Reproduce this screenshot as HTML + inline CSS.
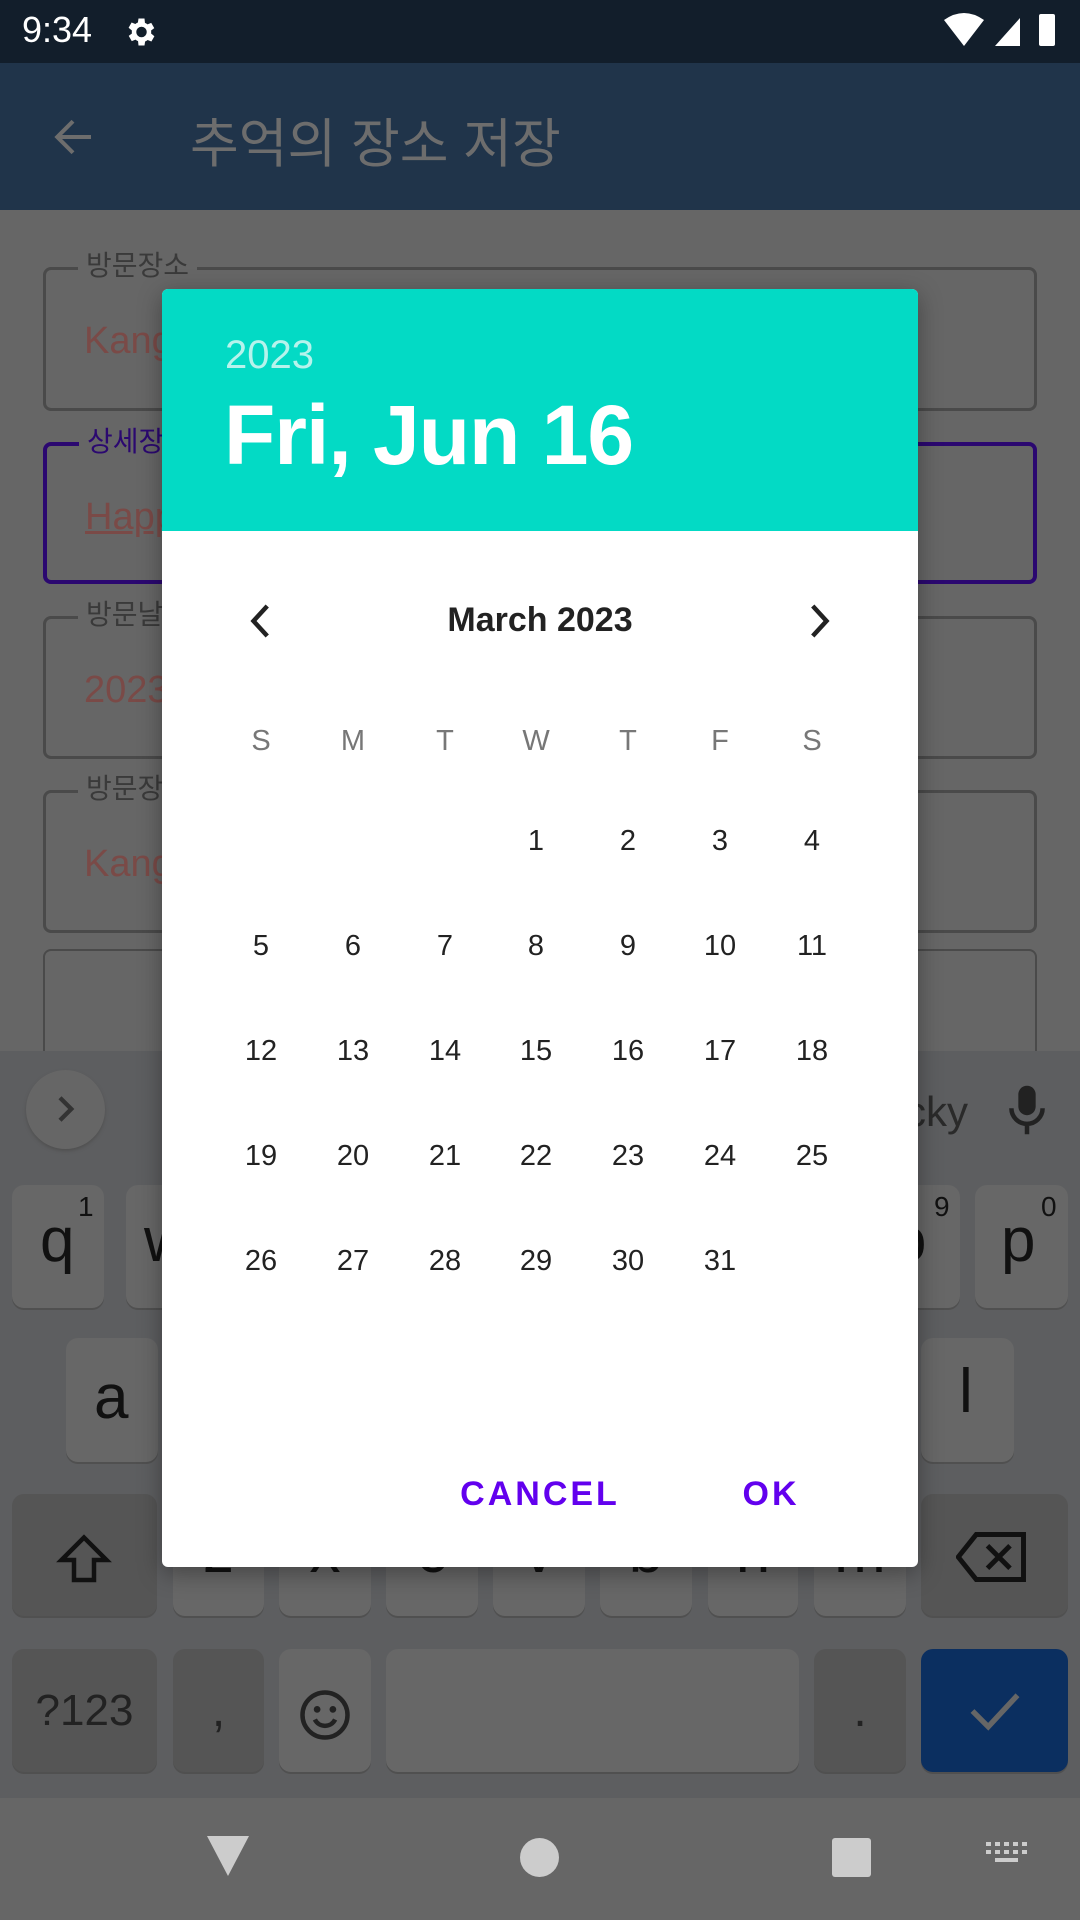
<!DOCTYPE html>
<html><head><meta charset="utf-8"><style>
*{margin:0;padding:0;box-sizing:border-box}
body{width:1080px;height:1920px;position:relative;overflow:hidden;background:#666;font-family:"Liberation Sans","Noto Sans CJK KR",sans-serif}
.a{position:absolute}
.fld{position:absolute;left:43px;width:994px;border:3px solid #4a4a4a;border-radius:8px}
.lbl{position:absolute;left:32px;top:-22px;background:#666;padding:0 8px;font-size:28px;color:#3a3a3a;line-height:36px}
.val{position:absolute;left:38px;font-size:38px;color:#7a4a47}
.key{position:absolute;background:#676767;border-radius:12px;box-shadow:0 2px 0 #505050;color:#111;text-align:center}
.dk{background:#555}
.kl{position:absolute;left:0;width:100%;top:22px;font-size:62px;color:#111}
.day{position:absolute;width:80px;margin-left:-40px;text-align:center;font-size:29px;color:#222;line-height:40px}
</style></head><body>
<div class="a" style="left:0;top:0;width:1080px;height:63px;background:#121e2b"></div>
<div class="a" style="left:22px;top:9px;font-size:36px;color:#fff">9:34</div>
<svg class="a" style="left:122px;top:14px" width="36" height="36" viewBox="0 0 24 24"><path fill="#fff" d="M19.4 13a7.5 7.5 0 000-2l2.1-1.6-2-3.5-2.5 1a7 7 0 00-1.7-1L15 3h-4l-.4 2.7a7 7 0 00-1.7 1l-2.5-1-2 3.5L6.6 11a7.5 7.5 0 000 2l-2.1 1.6 2 3.5 2.5-1a7 7 0 001.7 1L11 21h4l.4-2.7a7 7 0 001.7-1l2.5 1 2-3.5zM13 15.5A3.5 3.5 0 1113 8.5a3.5 3.5 0 010 7z"/></svg>
<svg class="a" style="left:944px;top:12px" width="120" height="36" viewBox="0 0 120 36"><path fill="#fff" d="M0 8Q20-6 40 8L20 34z"/><path fill="#fff" d="M51 34L76 6v28z"/><rect x="95" y="2" width="16" height="32" rx="2" fill="#fff"/></svg>
<div class="a" style="left:0;top:63px;width:1080px;height:147px;background:#20344a"></div>
<svg class="a" style="left:46px;top:110px" width="54" height="54" viewBox="0 0 24 24"><path fill="none" stroke="#6d6d6d" stroke-width="1.8" d="M20 12H5M12 5l-7 7 7 7"/></svg>
<div class="a" style="left:190px;top:102px;font-size:53px;color:#6d6d6d">추억의 장소 저장</div>

<div class="fld" style="top:267px;height:144px"><div class="lbl">방문장소</div><div class="val" style="top:50px">Kang</div></div>
<div class="fld" style="top:442px;height:142px;border-color:#2b0870;border-width:4px"><div class="lbl" style="color:#2b0870">상세장소</div><div class="val" style="top:50px;text-decoration:underline">Happy</div></div>
<div class="fld" style="top:616px;height:143px"><div class="lbl">방문날짜</div><div class="val" style="top:50px">2023</div></div>
<div class="fld" style="top:790px;height:143px"><div class="lbl">방문장소</div><div class="val" style="top:50px">Kang</div></div>
<div class="fld" style="top:949px;height:140px;border-width:2px"></div>

<div class="a" style="left:0;top:1051px;width:1080px;height:747px;background:#5d5e60"></div>
<div class="a" style="left:26px;top:1070px;width:79px;height:79px;border-radius:50%;background:#666;box-shadow:0 2px 3px #505050"></div>
<svg class="a" style="left:50px;top:1094px" width="30" height="30" viewBox="0 0 24 24"><path fill="none" stroke="#333" stroke-width="3.5" d="M8 3l9 9-9 9"/></svg>
<div class="a" style="left:905px;top:1088px;font-size:42px;color:#2a2a2a">cky</div>
<svg class="a" style="left:1006px;top:1084px" width="42" height="52" viewBox="0 0 24 30"><rect x="7" y="1" width="10" height="17" rx="5" fill="#222"/><path d="M3 14a9 9 0 0018 0M12 23v6" stroke="#222" stroke-width="2.6" fill="none"/></svg>

<div class="key" style="left:12px;top:1185px;width:92px;height:123px"><span class="a" style="left:66px;top:6px;font-size:28px">1</span><span class="a" style="left:28px;top:20px;font-size:62px">q</span></div>
<div class="key" style="left:126px;top:1185px;width:92px;height:123px"><span class="a" style="left:18px;top:20px;font-size:62px">w</span></div>
<div class="key" style="left:868px;top:1185px;width:92px;height:123px"><span class="a" style="left:66px;top:6px;font-size:28px">9</span><span class="a" style="left:24px;top:20px;font-size:62px">o</span></div>
<div class="key" style="left:975px;top:1185px;width:93px;height:123px"><span class="a" style="left:66px;top:6px;font-size:28px">0</span><span class="a" style="left:26px;top:20px;font-size:62px">p</span></div>
<div class="key" style="left:66px;top:1338px;width:92px;height:124px"><span class="a" style="left:28px;top:24px;font-size:62px">a</span></div>
<div class="key" style="left:921px;top:1338px;width:93px;height:124px"><span class="a" style="left:38px;top:18px;font-size:62px">l</span></div>
<div class="key dk" style="left:12px;top:1494px;width:145px;height:122px"></div>
<svg class="a" style="left:54px;top:1530px" width="60" height="60" viewBox="0 0 24 24"><path fill="none" stroke="#111" stroke-width="1.8" d="M12 3L3 12h5v8h8v-8h5z"/></svg>
<div class="key" style="left:173px;top:1494px;width:91px;height:122px"><span class="kl">z</span></div>
<div class="key" style="left:279px;top:1494px;width:92px;height:122px"><span class="kl">x</span></div>
<div class="key" style="left:386px;top:1494px;width:92px;height:122px"><span class="kl">c</span></div>
<div class="key" style="left:493px;top:1494px;width:92px;height:122px"><span class="kl">v</span></div>
<div class="key" style="left:600px;top:1494px;width:92px;height:122px"><span class="kl">b</span></div>
<div class="key" style="left:708px;top:1494px;width:90px;height:122px"><span class="kl">n</span></div>
<div class="key" style="left:814px;top:1494px;width:92px;height:122px"><span class="kl">m</span></div>
<div class="key dk" style="left:921px;top:1494px;width:147px;height:122px"></div>
<svg class="a" style="left:956px;top:1530px" width="72" height="54" viewBox="0 0 32 24"><path fill="none" stroke="#111" stroke-width="2.2" d="M9 2h21v20H9L1 12z M14 7l10 10M24 7L14 17"/></svg>

<div class="key dk" style="left:12px;top:1649px;width:145px;height:123px;font-size:44px;line-height:123px;color:#222">?123</div>
<div class="key dk" style="left:173px;top:1649px;width:91px;height:123px;font-size:48px;line-height:123px;color:#222">,</div>
<div class="key" style="left:279px;top:1649px;width:92px;height:123px"></div>
<svg class="a" style="left:298px;top:1688px" width="54" height="54" viewBox="0 0 24 24"><circle cx="12" cy="12" r="10" fill="none" stroke="#222" stroke-width="2"/><circle cx="8.5" cy="9.5" r="1.5" fill="#222"/><circle cx="15.5" cy="9.5" r="1.5" fill="#222"/><path d="M7.5 14a5 5 0 009 0" fill="none" stroke="#222" stroke-width="2"/></svg>
<div class="key" style="left:386px;top:1649px;width:413px;height:123px"></div>
<div class="key dk" style="left:814px;top:1649px;width:92px;height:123px;font-size:48px;line-height:123px;color:#222">.</div>
<div class="key" style="left:921px;top:1649px;width:147px;height:123px;background:#0b2f60"></div>
<svg class="a" style="left:968px;top:1688px" width="54" height="46" viewBox="0 0 24 20"><path fill="none" stroke="#666" stroke-width="2.4" d="M2 10l7 7L22 3"/></svg>

<div class="a" style="left:0;top:1798px;width:1080px;height:122px;background:#666"></div>
<svg class="a" style="left:203px;top:1834px" width="50" height="44" viewBox="0 0 50 44"><path d="M4 2h42L25 42z" fill="#ccc"/></svg>
<div class="a" style="left:520px;top:1838px;width:39px;height:39px;border-radius:50%;background:#ccc"></div>
<div class="a" style="left:832px;top:1838px;width:39px;height:39px;border-radius:3px;background:#ccc"></div>
<svg class="a" style="left:986px;top:1842px" width="42" height="26" viewBox="0 0 42 26"><g fill="#ccc"><rect x="0" y="0" width="5" height="4"/><rect x="9" y="0" width="5" height="4"/><rect x="18" y="0" width="5" height="4"/><rect x="27" y="0" width="5" height="4"/><rect x="36" y="0" width="5" height="4"/><rect x="0" y="8" width="5" height="4"/><rect x="9" y="8" width="5" height="4"/><rect x="18" y="8" width="5" height="4"/><rect x="27" y="8" width="5" height="4"/><rect x="36" y="8" width="5" height="4"/><rect x="9" y="16" width="23" height="4"/></g></svg>

<div class="a" style="left:162px;top:289px;width:756px;height:1278px;background:#fff;border-radius:6px;box-shadow:0 6px 24px rgba(0,0,0,.35);overflow:hidden">
 <div class="a" style="left:0;top:0;width:756px;height:242px;background:#03dac5"></div>
 <div class="a" style="left:63px;top:44px;font-size:40px;color:#b6f3ec">2023</div>
 <div class="a" style="left:62px;top:98px;font-size:84px;color:#fff;font-weight:bold;letter-spacing:-1px">Fri, Jun 16</div>
 <svg class="a" style="left:84px;top:312px" width="30" height="40" viewBox="0 0 24 30"><path d="M17 3L6 15l11 12" fill="none" stroke="#222" stroke-width="3.6"/></svg>
 <svg class="a" style="left:642px;top:312px" width="30" height="40" viewBox="0 0 24 30"><path d="M7 3l11 12L7 27" fill="none" stroke="#222" stroke-width="3.6"/></svg>
 <div class="a" style="left:0;top:312px;width:756px;text-align:center;font-size:34px;color:#222;font-weight:bold">March 2023</div>
 <div style="position:absolute;left:0;top:432px;width:756px;color:#757575">
  <div class="day" style="left:99px;top:0;color:#777">S</div><div class="day" style="left:191px;top:0;color:#777">M</div><div class="day" style="left:283px;top:0;color:#777">T</div><div class="day" style="left:374px;top:0;color:#777">W</div><div class="day" style="left:466px;top:0;color:#777">T</div><div class="day" style="left:558px;top:0;color:#777">F</div><div class="day" style="left:650px;top:0;color:#777">S</div>
 </div>
 <div style="position:absolute;left:0;top:532px">
  <div class="day" style="left:374px;top:0">1</div><div class="day" style="left:466px;top:0">2</div><div class="day" style="left:558px;top:0">3</div><div class="day" style="left:650px;top:0">4</div>
  <div class="day" style="left:99px;top:105px">5</div><div class="day" style="left:191px;top:105px">6</div><div class="day" style="left:283px;top:105px">7</div><div class="day" style="left:374px;top:105px">8</div><div class="day" style="left:466px;top:105px">9</div><div class="day" style="left:558px;top:105px">10</div><div class="day" style="left:650px;top:105px">11</div>
  <div class="day" style="left:99px;top:210px">12</div><div class="day" style="left:191px;top:210px">13</div><div class="day" style="left:283px;top:210px">14</div><div class="day" style="left:374px;top:210px">15</div><div class="day" style="left:466px;top:210px">16</div><div class="day" style="left:558px;top:210px">17</div><div class="day" style="left:650px;top:210px">18</div>
  <div class="day" style="left:99px;top:315px">19</div><div class="day" style="left:191px;top:315px">20</div><div class="day" style="left:283px;top:315px">21</div><div class="day" style="left:374px;top:315px">22</div><div class="day" style="left:466px;top:315px">23</div><div class="day" style="left:558px;top:315px">24</div><div class="day" style="left:650px;top:315px">25</div>
  <div class="day" style="left:99px;top:420px">26</div><div class="day" style="left:191px;top:420px">27</div><div class="day" style="left:283px;top:420px">28</div><div class="day" style="left:374px;top:420px">29</div><div class="day" style="left:466px;top:420px">30</div><div class="day" style="left:558px;top:420px">31</div>
 </div>
 <div class="a" style="left:298px;top:1186px;width:160px;text-align:center;font-size:34px;color:#6200ee;font-weight:bold;letter-spacing:3px">CANCEL</div>
 <div class="a" style="left:569px;top:1186px;width:80px;text-align:center;font-size:34px;color:#6200ee;font-weight:bold;letter-spacing:3px">OK</div>
</div>
</body></html>
